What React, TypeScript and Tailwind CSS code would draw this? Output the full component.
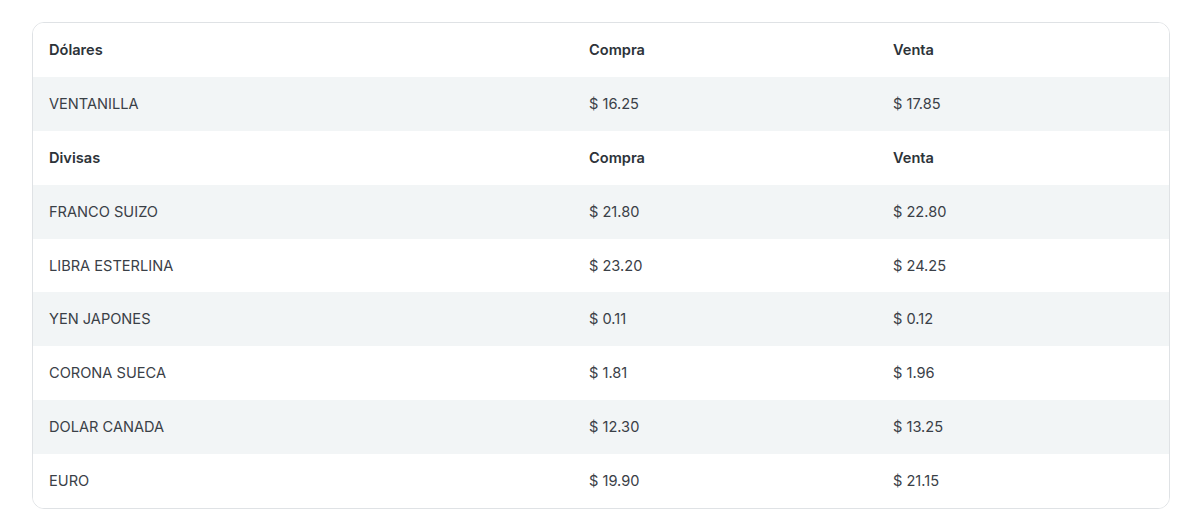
import React from 'react';

type Row = { name: string; compra: string; venta: string };

const dolares: Row[] = [{ name: 'VENTANILLA', compra: '$ 16.25', venta: '$ 17.85' }];

const divisas: Row[] = [
    { name: 'FRANCO SUIZO', compra: '$ 21.80', venta: '$ 22.80' },
    { name: 'LIBRA ESTERLINA', compra: '$ 23.20', venta: '$ 24.25' },
    { name: 'YEN JAPONES', compra: '$ 0.11', venta: '$ 0.12' },
    { name: 'CORONA SUECA', compra: '$ 1.81', venta: '$ 1.96' },
    { name: 'DOLAR CANADA', compra: '$ 12.30', venta: '$ 13.25' },
    { name: 'EURO', compra: '$ 19.90', venta: '$ 21.15' },
];

const HeaderRow: React.FC<{ title: string }> = ({ title }) => (
    <tr className="bg-white">
        <th className="h-[53.9px] px-4 text-left font-semibold text-[#2d3339]">{title}</th>
        <th className="h-[53.9px] px-4 text-left font-semibold text-[#2d3339]">Compra</th>
        <th className="h-[53.9px] px-4 text-left font-semibold text-[#2d3339]">Venta</th>
    </tr>
);

const DataRow: React.FC<{ row: Row; striped: boolean }> = ({ row, striped }) => (
    <tr className={striped ? 'bg-[#f2f5f6]' : 'bg-white'}>
        <td className="h-[53.9px] px-4 text-[#3a4047]">{row.name}</td>
        <td className="h-[53.9px] px-4 text-[#3a4047]">{row.compra}</td>
        <td className="h-[53.9px] px-4 text-[#3a4047]">{row.venta}</td>
    </tr>
);

export default function App() {
    return (
        <div className="min-h-screen bg-white pt-[22px] pl-8 pr-[30px]" style={{ fontFamily: 'Inter, "Noto Sans", sans-serif' }}>
            <div className="overflow-hidden rounded-xl border border-[#dfe2e5] bg-white">
                <table className="w-full table-fixed border-collapse text-[14.6px] leading-[22px]">
                    <colgroup>
                        <col className="w-[540px]" />
                        <col className="w-[304px]" />
                        <col />
                    </colgroup>
                    <tbody>
                        <HeaderRow title="Dólares" />
                        {dolares.map(r => <DataRow key={r.name} row={r} striped />)}
                        <HeaderRow title="Divisas" />
                        {divisas.map((r, i) => <DataRow key={r.name} row={r} striped={i % 2 === 0} />)}
                    </tbody>
                </table>
            </div>
        </div>
    );
}
